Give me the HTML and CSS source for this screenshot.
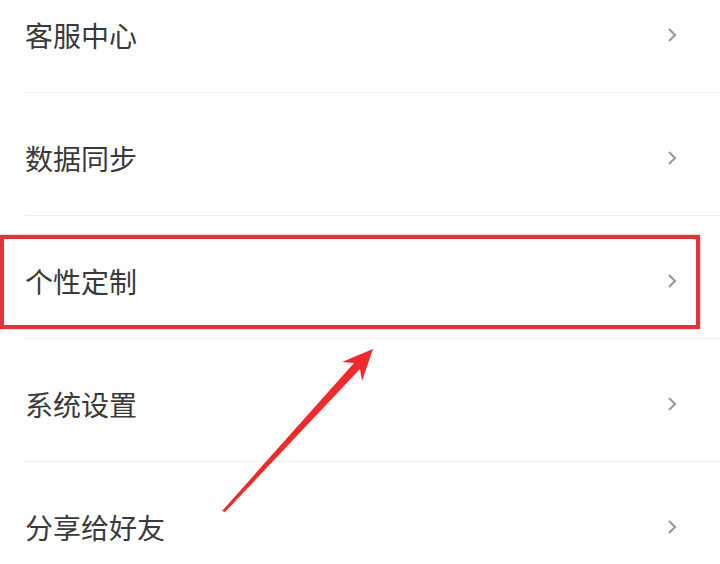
FILE: index.html
```html
<!DOCTYPE html>
<html lang="zh-CN">
<head>
    <meta charset="UTF-8">
    <title>我的设置</title>
    <link rel="stylesheet" href="styles.css">
</head>
<body>
    <div class="menu">
        <div class="menu-item">
            <span class="label">客服中心</span>
            <svg class="chevron" viewBox="0 0 10 16"><polyline points="2,2 8,8 2,14"/></svg>
        </div>
        <div class="menu-item">
            <span class="label">数据同步</span>
            <svg class="chevron" viewBox="0 0 10 16"><polyline points="2,2 8,8 2,14"/></svg>
        </div>
        <div class="menu-item highlighted">
            <div class="highlight-box"></div>
            <span class="label">个性定制</span>
            <svg class="chevron" viewBox="0 0 10 16"><polyline points="2,2 8,8 2,14"/></svg>
        </div>
        <div class="menu-item">
            <span class="label">系统设置</span>
            <svg class="chevron" viewBox="0 0 10 16"><polyline points="2,2 8,8 2,14"/></svg>
        </div>
        <div class="menu-item">
            <span class="label">分享给好友</span>
            <svg class="chevron" viewBox="0 0 10 16"><polyline points="2,2 8,8 2,14"/></svg>
        </div>
    </div>

    <!-- red pointer arrow drawn over the list -->
    <svg class="pointer" viewBox="0 0 720 564">
        <polygon points="222,511 354,363 342,362 373,349 362,381 360,369 225,512"/>
    </svg>
</body>
</html>
```

FILE: styles.css
```css
body {
    margin: 0;
    background-color: #ffffff;
    font-family: "Noto Sans CJK SC", "Noto Sans", sans-serif;
    overflow: hidden;
}
.menu {
    margin-top: -30px;
}
.menu-item {
    position: relative;
    box-sizing: border-box;
    height: 123px;
    margin-left: 25px;
    padding: 8px 43px 0 0;
    border-bottom: 1px solid #efefef;
    display: flex;
    align-items: center;
    justify-content: space-between;
}
.label {
    font-size: 28px;
    color: #3a3a3a;
    letter-spacing: 0;
}
.chevron {
    width: 10px;
    height: 16px;
    fill: none;
    stroke: #9a9a9a;
    stroke-width: 2.2;
}
.highlight-box {
    position: absolute;
    left: -25px;
    top: 19px;
    width: 700px;
    height: 94px;
    box-sizing: border-box;
    border: 4px solid #e23339;
    box-shadow: 0 0 2px rgba(226, 51, 57, 0.5);
}
.pointer {
    position: absolute;
    top: 0;
    left: 0;
    width: 720px;
    height: 564px;
    pointer-events: none;
}
.pointer polygon {
    fill: #ef2a2c;
}
```
